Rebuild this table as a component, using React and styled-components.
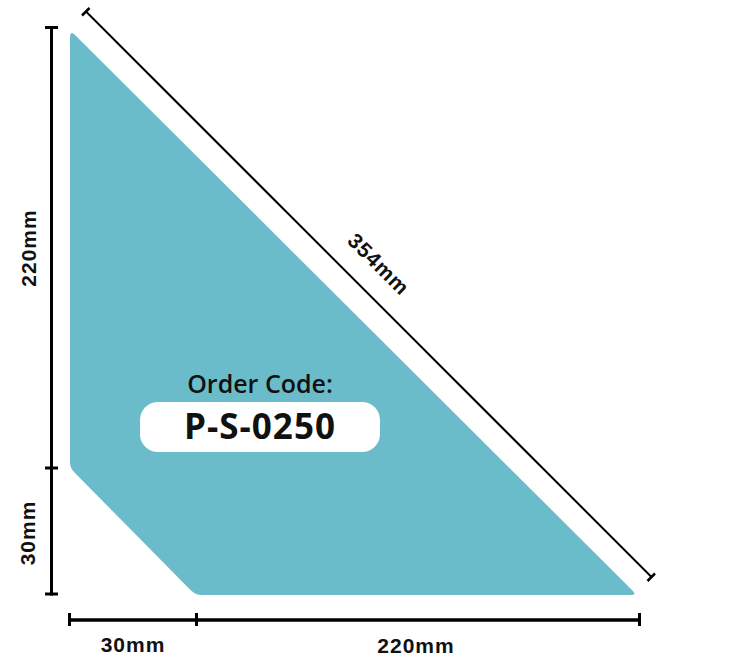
import React from "react";
import styled, { createGlobalStyle } from "styled-components";

const Global = createGlobalStyle`
  html, body { margin: 0; padding: 0; background: #ffffff; }
  body { font-family: "Liberation Sans", Arial, sans-serif; }
`;

const Canvas = styled.div`
  position: relative;
  width: 732px;
  height: 668px;
  background: #ffffff;
  overflow: hidden;
`;

const Diagram = styled.svg`
  display: block;
  width: 732px;
  height: 668px;
`;

const Shape = styled.path`
  fill: #6bbccb;
`;

const Dim = styled.line`
  stroke: #000000;
  stroke-width: ${(p) => p.$w || 3};
  stroke-linecap: butt;
`;

const Label = styled.text`
  font-family: "Liberation Sans", Arial, sans-serif;
  font-weight: 700;
  font-size: 21px;
  letter-spacing: 1px;
  fill: #111111;
  text-anchor: middle;
`;

const OrderTitle = styled.text`
  font-family: "Open Sans", "Noto Sans", sans-serif;
  font-weight: 600;
  font-size: 25px;
  fill: #111111;
  text-anchor: middle;
`;

const Pill = styled.rect`
  fill: #ffffff;
`;

const CodeText = styled.text`
  font-family: "Open Sans", "Noto Sans", sans-serif;
  font-weight: 700;
  font-size: 35px;
  letter-spacing: 1px;
  fill: #111111;
  text-anchor: middle;
`;

function Tick({ x1, y1, x2, y2, w }) {
  return <Dim x1={x1} y1={y1} x2={x2} y2={y2} $w={w} />;
}

export default function App() {
  const half = 7.6; // half cap height offset for centering rotated labels
  return (
    <>
      <Global />
      <Canvas>
        <Diagram viewBox="0 0 732 668" xmlns="http://www.w3.org/2000/svg">
          <Shape d="M 70 38 L 70 462 Q 70 468 74.5 472.5 L 190 589.5 Q 195.5 595 201.5 595 L 631 595 Q 637 595 632.5 590.5 L 75 35 Q 70 30 70 38 Z" />

          {/* left vertical dimension */}
          <Dim x1={51.5} y1={26} x2={51.5} y2={595.5} />
          <Tick x1={45} y1={27.5} x2={58} y2={27.5} />
          <Tick x1={45} y1={468} x2={58} y2={468} />
          <Tick x1={45} y1={594} x2={58} y2={594} />

          {/* bottom horizontal dimension */}
          <Dim x1={69.5} y1={620} x2={639.5} y2={620} $w={3.5} />
          <Tick x1={69.5} y1={613} x2={69.5} y2={626} />
          <Tick x1={196.5} y1={613} x2={196.5} y2={626} />
          <Tick x1={639.5} y1={613} x2={639.5} y2={626} />

          {/* diagonal dimension */}
          <Dim x1={86} y1={11.5} x2={651.5} y2={577} $w={2} />
          <Tick x1={82} y1={15.5} x2={89.5} y2={8} w={2.5} />
          <Tick x1={647.5} y1={581} x2={655} y2={573.5} w={2.5} />

          <Label x={28} y={248 + half} transform="rotate(-90 28 248)">220mm</Label>
          <Label x={27} y={533 + half} transform="rotate(-90 27 533)">30mm</Label>
          <Label x={133} y={652}>30mm</Label>
          <Label x={416} y={653}>220mm</Label>
          <Label x={379} y={264 + half} transform="rotate(45 379 264)">354mm</Label>

          <OrderTitle x={260} y={393}>Order Code:</OrderTitle>
          <Pill x={140} y={402} width={240} height={50} rx={18} ry={18} />
          <CodeText x={260} y={439}>P-S-0250</CodeText>
        </Diagram>
      </Canvas>
    </>
  );
}
